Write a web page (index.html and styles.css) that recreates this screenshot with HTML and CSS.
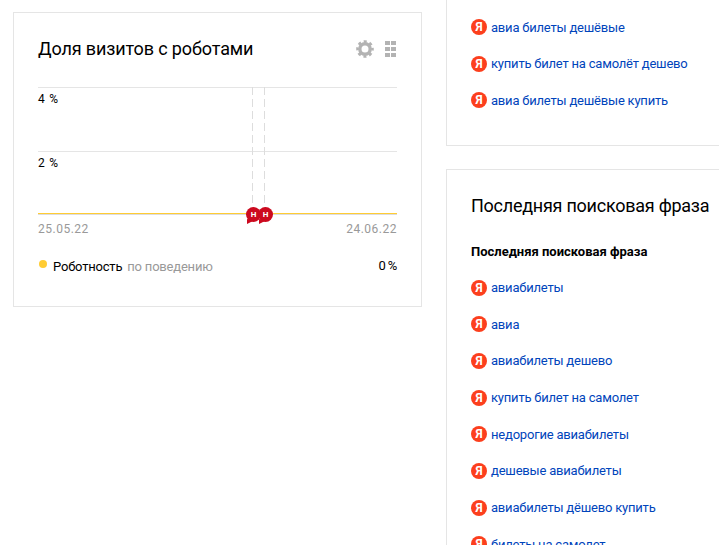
FILE: index.html
```html
<!DOCTYPE html>
<html lang="ru">
<head>
    <meta charset="UTF-8">
    <meta name="viewport" content="width=device-width, initial-scale=1.0">
    <title>Доля визитов с роботами</title>
    <link rel="stylesheet" href="styles.css">
</head>
<body>
    <div class="page">
        <div class="card left-card">
            <div class="card-head">
                <h2>Доля визитов с роботами</h2>
                <div class="tools">
                    <svg class="gear" width="18" height="18" viewBox="0 0 18 18">
                        <circle cx="9" cy="9" r="5.200" fill="none" stroke="#b3b3b3" stroke-width="3.400"/>
                        <circle cx="9" cy="9" r="7.500" fill="none" stroke="#b3b3b3" stroke-width="2.600" stroke-dasharray="3 2.890" stroke-dashoffset="1.500"/>
                    </svg>
                    <div class="dots">
                        <i></i><i></i><i></i><i></i><i></i><i></i>
                    </div>
                </div>
            </div>

            <div class="chart">
                <div class="grid-row">4 %</div>
                <div class="grid-row">2 %</div>
                <div class="axis"></div>
                <div class="dash dash-1"></div>
                <div class="dash dash-2"></div>
                <div class="pin pin-1">Н</div>
                <div class="pin pin-2">Н</div>
            </div>
            <div class="dates">
                <span>25.05.22</span>
                <span>24.06.22</span>
            </div>

            <div class="legend">
                <span class="legend-dot"></span>
                <span class="legend-name">Роботность</span>
                <span class="legend-note">по поведению</span>
                <span class="legend-value">0 %</span>
            </div>
        </div>

        <div class="right-col">
            <div class="card top-card">
                <ul class="phrases">
                    <li><span class="ya">Я</span><a href="#">авиа билеты дешёвые</a></li>
                    <li><span class="ya">Я</span><a href="#">купить билет на самолёт дешево</a></li>
                    <li><span class="ya">Я</span><a href="#">авиа билеты дешёвые купить</a></li>
                </ul>
            </div>
            <div class="card phrase-card">
                <h2>Последняя поисковая фраза</h2>
                <h3>Последняя поисковая фраза</h3>
                <ul class="phrases">
                    <li><span class="ya">Я</span><a href="#">авиабилеты</a></li>
                    <li><span class="ya">Я</span><a href="#">авиа</a></li>
                    <li><span class="ya">Я</span><a href="#">авиабилеты дешево</a></li>
                    <li><span class="ya">Я</span><a href="#">купить билет на самолет</a></li>
                    <li><span class="ya">Я</span><a href="#">недорогие авиабилеты</a></li>
                    <li><span class="ya">Я</span><a href="#">дешевые авиабилеты</a></li>
                    <li><span class="ya">Я</span><a href="#">авиабилеты дёшево купить</a></li>
                    <li><span class="ya">Я</span><a href="#">билеты на самолет</a></li>
                </ul>
            </div>
        </div>
    </div>
</body>
</html>
```

FILE: styles.css
```css
html, body {
    margin: 0;
    height: 100%;
    overflow: hidden;
    background-color: #ffffff;
}
body {
    font-family: Roboto, sans-serif;
    color: #000;
}
.page {
    display: flex;
    align-items: flex-start;
    gap: 24px;
    padding-left: 13px;
    height: 545px;
    overflow: hidden;
}
.card {
    border: 1px solid #e5e5e5;
    box-sizing: border-box;
}
h2 {
    margin: 0;
    font-size: 18px;
    font-weight: 400;
    line-height: 24px;
    letter-spacing: -0.13px;
    white-space: nowrap;
}
.left-card {
    width: 409px;
    height: 295px;
    margin-top: 12px;
    padding: 22px 24px 0;
    flex-shrink: 0;
}
.card-head {
    display: flex;
    justify-content: space-between;
    align-items: center;
    height: 28px;
}
.tools {
    display: flex;
    align-items: center;
    gap: 10px;
    margin-right: 1px;
}
.gear {
    display: block;
    margin-right: 1px;
}
.dots {
    display: grid;
    grid-template-columns: 5px 5px;
    grid-auto-rows: 4px;
    gap: 2px 1px;
}
.dots i {
    background-color: #b3b3b3;
}
.chart {
    position: relative;
    margin-top: 24px;
    width: 359px;
}
.grid-row {
    height: 64px;
    box-sizing: border-box;
    border-top: 1px solid #e5e5e5;
    padding-top: 4px;
    font-size: 12px;
    line-height: 14px;
    word-spacing: 1.5px;
}
.axis {
    height: 2px;
    box-sizing: border-box;
    margin-top: -2px;
    border-top: 1px solid #ffcc33;
    background-color: #dddddd;
}
.dash {
    position: absolute;
    top: 0;
    bottom: 0;
    width: 1px;
    background-image: repeating-linear-gradient(to bottom, #dddddd 0, #dddddd 8px, transparent 8px, transparent 12px);
}
.dash-1 { left: 214px; }
.dash-2 { left: 226px; }
.pin {
    position: absolute;
    top: 120px;
    width: 15px;
    height: 15px;
    border-radius: 50%;
    background-color: #cc0a1f;
    color: #fff;
    font-size: 8px;
    font-weight: 700;
    line-height: 15px;
    text-align: center;
}
.pin::after {
    content: "";
    position: absolute;
    left: 1px;
    top: 12px;
    width: 7px;
    height: 5px;
    background-color: #cc0a1f;
    clip-path: polygon(0 0, 100% 30%, 0 100%);
}
.pin-1 { left: 208px; }
.pin-2 { left: 220px; }
.dates {
    display: flex;
    justify-content: space-between;
    width: 359px;
    margin-top: 6px;
    font-size: 12px;
    line-height: 16px;
    letter-spacing: 0.5px;
    color: #999999;
}
.legend {
    display: flex;
    align-items: center;
    width: 359px;
    margin-top: 21px;
    font-size: 13px;
    line-height: 18px;
    letter-spacing: -0.2px;
}
.legend-dot {
    width: 8px;
    height: 8px;
    border-radius: 50%;
    background-color: #ffcc33;
    margin: 0 6px 7px 1px;
}
.legend-note {
    margin-left: 5px;
    color: #999999;
}
.legend-value {
    margin-left: auto;
    margin-top: -2px;
    word-spacing: -1px;
}
.right-col {
    flex-grow: 1;
    min-width: 0;
}
.top-card {
    height: 146px;
    border-top: none;
    border-right: none;
    padding: 8.800px 0 0 24px;
}
.phrase-card {
    margin-top: 23px;
    border-right: none;
    padding: 24px 0 0 24px;
}
.phrase-card h2 {
    letter-spacing: -0.25px;
}
h3 {
    margin: 25px 0 8.300px;
    font-size: 13px;
    font-weight: 700;
    line-height: 18px;
}
.phrases {
    list-style: none;
    margin: 0;
    padding: 0;
}
.phrases li {
    display: flex;
    align-items: center;
    height: 36.67px;
    font-size: 13px;
    letter-spacing: -0.2px;
    white-space: nowrap;
}
.phrases a {
    color: #0044bb;
    text-decoration: none;
}
.ya {
    width: 16px;
    height: 16px;
    border-radius: 50%;
    background-color: #fc3f1d;
    color: #fff;
    font-size: 12px;
    font-weight: 700;
    line-height: 16px;
    text-align: center;
    margin-right: 4px;
    flex-shrink: 0;
}
```
